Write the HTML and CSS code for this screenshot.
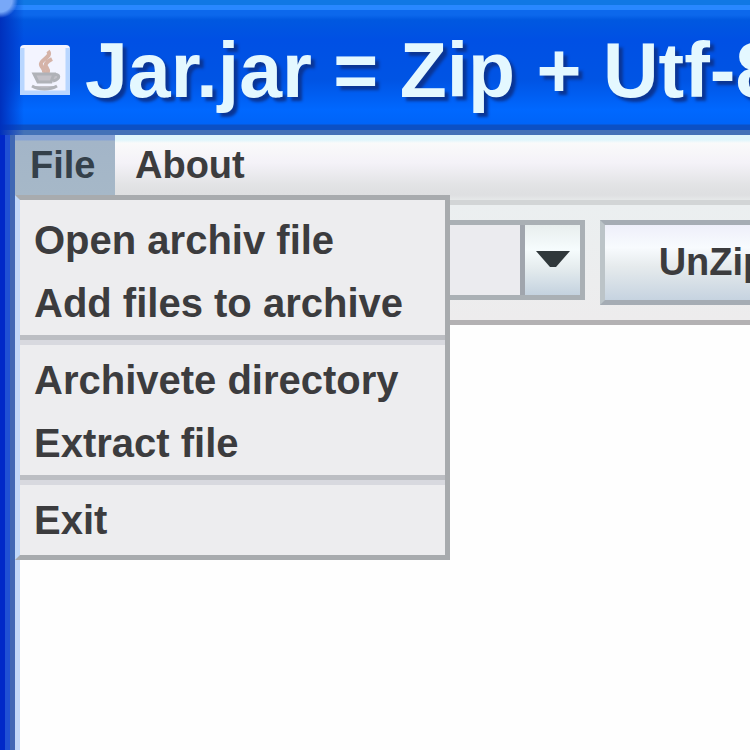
FILE: index.html
```html
<!DOCTYPE html>
<html lang="en">
<head>
    <meta charset="UTF-8">
    <meta name="viewport" content="width=device-width, initial-scale=1.0">
    <title>Jar.jar = Zip + Utf-8</title>
    <link rel="stylesheet" href="styles.css">
</head>
<body>
    <div class="window">
        <header class="title-bar">
            <svg class="app-icon" viewBox="0 0 50 50" aria-hidden="true">
                <rect width="50" height="50" rx="4" fill="#f3f4ff"/>
                <path d="M2 3v45h46V3" fill="none" stroke="#b9d6ff" stroke-width="5"/>
                <path d="M28 6c5 6-9 9-7 14 1 3 4 4 3 8M32 14c-6 3-8 6-5 9 2 3 1 5-1 6" fill="none" stroke="#d5b3a8" stroke-width="4"/>
                <path d="M14 29h20l-3 8H18zM34 30c6-2 7 4-1 6M12 41c7 4 18 4 25 0" fill="#c3c1c8" stroke="#b0b2b8" stroke-width="3"/>
            </svg>
            <h1 class="title">Jar.jar = Zip + Utf-8</h1>
        </header>

        <div class="frame">
            <nav class="menu-bar">
                <button type="button" class="menu-btn active" aria-haspopup="true" aria-expanded="true">File</button>
                <button type="button" class="menu-btn" aria-haspopup="true">About</button>

                <div class="menu" role="menu">
                    <button type="button" class="menu-item" role="menuitem">Open archiv file</button>
                    <button type="button" class="menu-item" role="menuitem">Add files to archive</button>
                    <hr class="separator">
                    <button type="button" class="menu-item" role="menuitem">Archivete directory</button>
                    <button type="button" class="menu-item" role="menuitem">Extract file</button>
                    <hr class="separator">
                    <button type="button" class="menu-item" role="menuitem">Exit</button>
                </div>
            </nav>

            <div class="toolbar">
                <div class="combo">
                    <select class="combo-select" aria-label="Archive">
                        <option></option>
                    </select>
                    <svg class="combo-arrow" viewBox="0 0 34 18" aria-hidden="true">
                        <path d="M0 0h34L20 16h-6z" fill="#30383b"/>
                    </svg>
                </div>
                <button type="button" class="tool-btn">UnZip</button>
            </div>

            <main class="content"></main>
        </div>
    </div>
</body>
</html>
```

FILE: styles.css
```css
* {
    box-sizing: border-box;
}

body {
    margin: 0;
    font-family: "Liberation Sans", Arial, sans-serif;
    color: #3c3c3e;
    overflow: hidden;
}

button, select {
    font: inherit;
    color: inherit;
    margin: 0;
    border-radius: 0;
}

.window {
    display: flex;
    flex-direction: column;
    min-height: 100vh;
    overflow: hidden;
    background: #0028c8;
}

/* title bar */
.title-bar {
    display: flex;
    align-items: center;
    flex: none;
    height: 135px;
    padding: 4px 0 0 20px;
    background:
        radial-gradient(circle at 0 0, #78a8f8 0 12px, transparent 18px),
        linear-gradient(to right, #0030bc 0, rgba(0, 64, 220, 0) 24px),
        linear-gradient(#1078e4 0 5px, #2888ff 5px 10px, #0c68ec 10px 15px, #0058e0 20px, #0050e4 40px, #0054e4 80px, #0068ff 110px, #0064f8 124px, #0c50c4 125px 130px, #4472b8 130px);
}

.app-icon {
    flex: none;
    width: 50px;
    height: 50px;
    margin-right: 15px;
}

.title {
    margin: 0;
    color: #e4f8ff;
    font-size: 77px;
    font-weight: bold;
    line-height: 80px;
    white-space: nowrap;
    text-shadow: 4px 4px 3px #0a3594;
}

/* window frame */
.frame {
    display: flex;
    flex: 1;
    flex-direction: column;
    border-left: 15px solid;
    border-image: linear-gradient(to right, #0028c8 0 5px, #2050d4 5px 10px, #4068b4 10px) 0 0 0 15;
}

/* menus */
.menu-bar {
    position: relative;
    z-index: 1;
    display: flex;
    flex: none;
    height: 70px;
    border-bottom: 5px solid #d2d5d6;
    background: linear-gradient(#e0f6fc 0 5px, #fafafa 8px, #f4f2f8 28px, #e2e3e5 50px, #dedfe1 60px, #e6e8e9);
    font-size: 38px;
    font-weight: bold;
}

.menu-btn {
    height: 65px;
    padding: 0 20px;
    border: none;
    border-bottom: 5px solid transparent;
    background: none;
    line-height: 60px;
}

.menu-btn.active {
    width: 100px;
    padding: 0 0 0 15px;
    border-bottom-color: #8796a5;
    background: linear-gradient(#88a4d4 0 5px, #a3b5c8 6px, #a6b8c8);
    color: #34404a;
    text-align: left;
}

.menu {
    position: absolute;
    top: 60px;
    left: 0;
    width: 435px;
    padding: 9px 0 3px;
    border: 5px solid #a8abae;
    border-left-color: #c0d8f8;
    background: #ededef;
    font-size: 40px;
}

.menu-item {
    display: block;
    width: 100%;
    height: 63px;
    padding: 0 0 0 14px;
    border: none;
    background: none;
    line-height: 63px;
    text-align: left;
    white-space: nowrap;
}

.menu-item:hover {
    background: #a6b8c8;
}

.separator {
    height: 10px;
    margin: 0 0 4px;
    border: none;
    background: linear-gradient(#bcbec3 50%, #d8d9df 50%);
}

/* toolbar */
.toolbar {
    display: flex;
    flex: none;
    gap: 15px;
    height: 120px;
    padding: 15px 0 0 5px;
    border-bottom: 5px solid #b3b1b3;
    background: linear-gradient(#ebeff0, #edeced);
    overflow: hidden;
}

.combo {
    position: relative;
    flex: none;
    width: 565px;
    height: 80px;
}

.combo-select {
    width: 100%;
    height: 100%;
    border: 5px solid #aab0b5;
    appearance: none;
    background:
        linear-gradient(#a0a5ad, #a0a5ad) right 55px top / 5px 100% no-repeat,
        linear-gradient(#e8eeee, #f6fcfd 35%, #e6edef 60%, #c4d2df) right / 55px 100% no-repeat,
        #ebebef;
}

.combo-arrow {
    position: absolute;
    top: 31px;
    right: 15px;
    width: 34px;
    height: 18px;
    pointer-events: none;
}

.tool-btn {
    flex: none;
    width: 225px;
    height: 85px;
    padding: 0;
    border: 5px solid #a5acb4;
    border-left-color: #bcc4c8;
    background: linear-gradient(#eeeffa, #f8fbfe 30%, #e6ebed 55%, #c6d3e0);
    font-size: 38px;
    font-weight: bold;
}

.content {
    flex: 1;
    border-left: 5px solid #c0d8f8;
    background: #fefefe;
}
```
